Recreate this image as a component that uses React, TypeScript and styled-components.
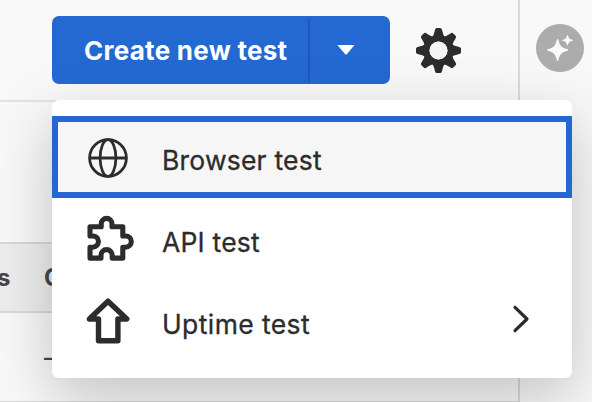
import React from "react";
import styled, { createGlobalStyle } from "styled-components";

const GlobalStyle = createGlobalStyle`
  * { box-sizing: border-box; }
  body { margin: 0; background: #f8f8f8; overflow: hidden; font-family: Inter, Roboto, sans-serif; color: #2c2c2c; }
`;

const Shell = styled.div`
  position: relative;
  display: flex;
  width: 592px;
  height: 402px;
  overflow: hidden;
  background: #f8f8f8;
`;

const Main = styled.main`
  display: flex;
  flex-direction: column;
  width: 520px;
  border-right: 2px solid #dadada;
`;

const Toolbar = styled.header`
  display: flex;
  flex: none;
  align-items: flex-start;
  gap: 26px;
  height: 102px;
  padding: 16px 0 0 52px;
  border-bottom: 2px solid #e2e2e2;
`;

const SplitButton = styled.div`
  display: flex;
  align-items: center;
  width: 338px;
  height: 68px;
  border-radius: 7px;
  background: #2468d2;
`;

const ButtonBase = styled.button`
  display: flex;
  align-items: center;
  height: 64px;
  padding: 0;
  border: 0;
  background: transparent;
  color: #fff;
`;

const CreateButton = styled(ButtonBase)`
  width: 258px;
  padding: 2px 0 0 32px;
  border-right: 2px solid #2159b9;
  font: 700 26px/34px Inter, sans-serif;
  letter-spacing: 0.27px;
  white-space: nowrap;
`;

const CaretButton = styled(ButtonBase)`
  width: 80px;
  padding-left: 27px;
`;

const IconButton = styled.button`
  display: flex;
  padding: 0;
  margin-top: 11px;
  border: 0;
  background: none;
`;

const Filters = styled.section`
  flex: none;
  height: 140px;
`;

const TableRow = styled.div<{ $head?: boolean }>`
  display: flex;
  align-items: center;
  height: ${(p) => (p.$head ? 71 : 90)}px;
  flex: none;
  border-top: ${(p) => (p.$head ? "2px solid #d8d8d8" : "0")};
  border-bottom: 2px solid #d8d8d8;
  background: ${(p) => (p.$head ? "#ededed" : "transparent")};
  color: #464646;
  font-size: 24px;
  font-weight: ${(p) => (p.$head ? 700 : 500)};
`;

const Cell = styled.div<{ $width: number }>`
  width: ${(p) => p.$width}px;
  flex: none;
  text-indent: -3px;
`;

const Rail = styled.aside`
  flex: 1;
  padding: 24px 0 0 16px;
`;

const Menu = styled.div`
  position: absolute;
  left: 52px;
  top: 100px;
  width: 520px;
  height: 278px;
  padding: 16px 0;
  border-radius: 7px;
  background: #fff;
  box-shadow: 0 20px 60px rgba(0, 0, 0, 0.22);
`;

const MenuItem = styled.div<{ $focused?: boolean }>`
  display: flex;
  align-items: center;
  height: 82px;
  padding: 0 34px 0 26px;
  border: 6px solid ${(p) => (p.$focused ? "#2467d2" : "transparent")};
  background: ${(p) => (p.$focused ? "#f6f6f6" : "transparent")};
`;

const ItemIcon = styled.span`
  display: flex;
  width: 48px;
  height: 48px;
  margin-top: 2px;
`;

const Label = styled.span<{ $spacing: number }>`
  flex: 1;
  margin: 5px 0 0 30px;
  font-size: 26.5px;
  line-height: 34px;
  letter-spacing: ${(p) => p.$spacing}px;
  -webkit-text-stroke: 0.3px currentColor;
`;

const Gear = () => (
  <svg width="46" height="46" viewBox="-22.5 -23.5 46 46" fill="#2c2c2c">
    {[0, 45, 90, 135, 180, 225, 270, 315].map((a) => (
      <path key={a} transform={`rotate(${a})`} d="M-6.2-13Q-4.4-16-3.7-20Q-3.2-22.5-2-22.5H2Q3.2-22.5 3.7-20Q4.4-16 6.2-13Z" />
    ))}
    <circle r="12.1" fill="none" stroke="#2c2c2c" strokeWidth="6.2" />
    <circle r="9" fill="#f4f4f4" />
  </svg>
);

const Assistant = () => (
  <svg width="48" height="48" viewBox="0 0 48 48">
    <circle cx="24" cy="24" r="24" fill="#acacac" />
    <g fill="#fafafa">
      <path d="M21.6 15Q22.4 15 22.8 17.2Q24 23 29 24.6Q32.5 25.3 32.5 26Q32.5 26.7 29 27.4Q24 29 22.8 34.5Q22.4 37 21.6 37Q20.8 37 20.4 34.5Q19.2 29 14.2 27.4Q10.8 26.7 10.8 26Q10.8 25.3 14.2 24.6Q19.2 23 20.4 17.2Q20.8 15 21.6 15Z" />
      <path d="M31.5 11Q32 11 32.3 12.4Q33 15 35.3 15.4Q37 15.7 37 16.2Q37 16.7 35.3 17Q33 17.5 32.3 20Q32 21.4 31.5 21.4Q31 21.4 30.7 20Q30 17.5 27.7 17Q26 16.7 26 16.2Q26 15.7 27.7 15.4Q30 15 30.7 12.4Q31 11 31.5 11Z" />
    </g>
  </svg>
);

const Globe = () => (
  <svg width="48" height="48" viewBox="84 134 48 48" fill="none" stroke="#2c2c2c" strokeWidth="2.8">
    <circle cx="108" cy="158" r="18.4" />
    <ellipse cx="108" cy="158" rx="7.9" ry="18.4" />
    <path d="M89.5 158h37" />
  </svg>
);

const Puzzle = () => (
  <svg width="48" height="48" viewBox="84 216 48 48" overflow="visible" fill="none" stroke="#2c2c2c" strokeWidth="5.1" strokeLinejoin="round">
    <path d="M90 226.8H101.2V223.8a5.4 5.4 0 0 1 10.8 0V226.8H122.8V236H125.7a5.6 5.6 0 0 1 0 11.2H122.8V258.1H112.2V255.2a5.6 5.6 0 0 0-11.2 0V258.1H90V247.2H92.8a5.6 5.6 0 0 0 0-11.2H90Z" />
  </svg>
);

const UpArrow = () => (
  <svg width="48" height="48" viewBox="84 298 48 48" overflow="visible" fill="none" stroke="#2c2c2c" strokeWidth="5.4" strokeLinejoin="round">
    <path d="M108 301.2L126.8 319H117.9V340.8H98.5V319H89.4Z" />
  </svg>
);

const Chevron = () => (
  <svg width="20" height="30" viewBox="0 2 20 30" overflow="visible" fill="none" stroke="#2c2c2c" strokeWidth="3.2" strokeLinecap="round" strokeLinejoin="round">
    <path d="M3 3.3L15 15L3 26.7" />
  </svg>
);

export default function App() {
  return (
    <>
      <GlobalStyle />
      <Shell>
        <Main>
          <Toolbar>
            <SplitButton>
              <CreateButton>Create new test</CreateButton>
              <CaretButton aria-label="More options">
                <svg width="18" height="12" viewBox="0 0 18 12">
                  <path d="M.3 1H17.5L10 10Q9 11 8 10Z" fill="#fff" />
                </svg>
              </CaretButton>
            </SplitButton>
            <IconButton aria-label="Settings"><Gear /></IconButton>
          </Toolbar>
          <Filters />
          <TableRow $head>
            <Cell $width={47}>s</Cell>
            <Cell $width={60}>C</Cell>
          </TableRow>
          <TableRow>
            <Cell $width={47} />
            <Cell $width={60}>–</Cell>
          </TableRow>
        </Main>
        <Rail><Assistant /></Rail>
        <Menu role="menu">
          <MenuItem role="menuitem" $focused>
            <ItemIcon><Globe /></ItemIcon>
            <Label $spacing={0.2}>Browser test</Label>
          </MenuItem>
          <MenuItem role="menuitem">
            <ItemIcon><Puzzle /></ItemIcon>
            <Label $spacing={0.2}>API test</Label>
          </MenuItem>
          <MenuItem role="menuitem">
            <ItemIcon><UpArrow /></ItemIcon>
            <Label $spacing={0.4}>Uptime test</Label>
            <Chevron />
          </MenuItem>
        </Menu>
      </Shell>
    </>
  );
}
